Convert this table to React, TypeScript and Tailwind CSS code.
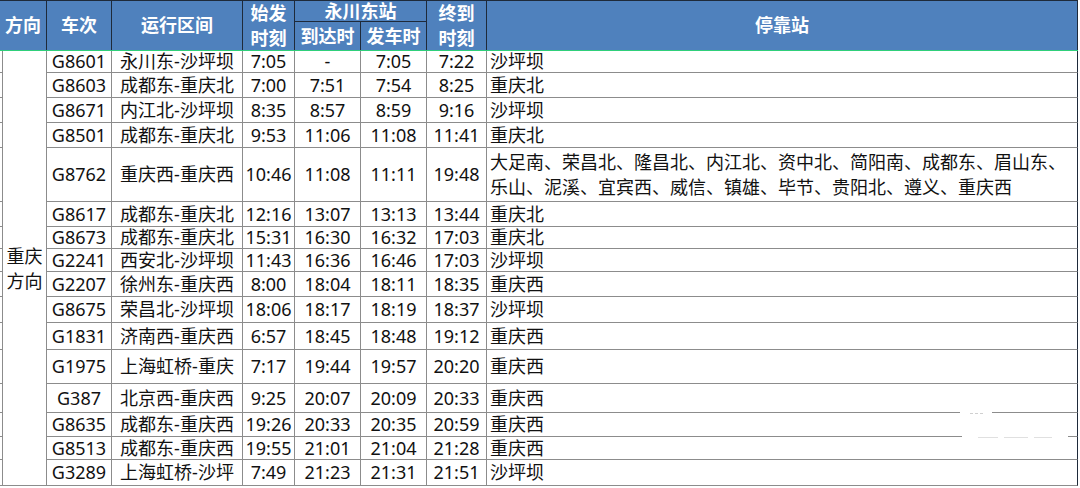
import React from "react";

type Row = { h: string; no: string; route: string; dep: string; arr: string; go: string; end: string; stops: string };

const rows: Row[] = [
  { h: "h-[22px]", no: "G8601", route: "永川东-沙坪坝", dep: "7:05", arr: "-", go: "7:05", end: "7:22", stops: "沙坪坝" },
  { h: "h-[25px]", no: "G8603", route: "成都东-重庆北", dep: "7:00", arr: "7:51", go: "7:54", end: "8:25", stops: "重庆北" },
  { h: "h-[25px]", no: "G8671", route: "内江北-沙坪坝", dep: "8:35", arr: "8:57", go: "8:59", end: "9:16", stops: "沙坪坝" },
  { h: "h-[25px]", no: "G8501", route: "成都东-重庆北", dep: "9:53", arr: "11:06", go: "11:08", end: "11:41", stops: "重庆北" },
  { h: "h-[54px]", no: "G8762", route: "重庆西-重庆西", dep: "10:46", arr: "11:08", go: "11:11", end: "19:48", stops: "大足南、荣昌北、隆昌北、内江北、资中北、简阳南、成都东、眉山东、乐山、泥溪、宜宾西、威信、镇雄、毕节、贵阳北、遵义、重庆西" },
  { h: "h-[25px]", no: "G8617", route: "成都东-重庆北", dep: "12:16", arr: "13:07", go: "13:13", end: "13:44", stops: "重庆北" },
  { h: "h-[22px]", no: "G8673", route: "成都东-重庆北", dep: "15:31", arr: "16:30", go: "16:32", end: "17:03", stops: "重庆北" },
  { h: "h-[23px]", no: "G2241", route: "西安北-沙坪坝", dep: "11:43", arr: "16:36", go: "16:46", end: "17:03", stops: "沙坪坝" },
  { h: "h-[25px]", no: "G2207", route: "徐州东-重庆西", dep: "8:00", arr: "18:04", go: "18:11", end: "18:35", stops: "重庆西" },
  { h: "h-[26px]", no: "G8675", route: "荣昌北-沙坪坝", dep: "18:06", arr: "18:17", go: "18:19", end: "18:37", stops: "沙坪坝" },
  { h: "h-[27px]", no: "G1831", route: "济南西-重庆西", dep: "6:57", arr: "18:45", go: "18:48", end: "19:12", stops: "重庆西" },
  { h: "h-[34px]", no: "G1975", route: "上海虹桥-重庆", dep: "7:17", arr: "19:44", go: "19:57", end: "20:20", stops: "重庆西" },
  { h: "h-[29px]", no: "G387", route: "北京西-重庆西", dep: "9:25", arr: "20:07", go: "20:09", end: "20:33", stops: "重庆西" },
  { h: "h-[24px]", no: "G8635", route: "成都东-重庆西", dep: "19:26", arr: "20:33", go: "20:35", end: "20:59", stops: "重庆西" },
  { h: "h-[23px]", no: "G8513", route: "成都东-重庆西", dep: "19:55", arr: "21:01", go: "21:04", end: "21:28", stops: "重庆西" },
  { h: "h-[26px]", no: "G3289", route: "上海虹桥-沙坪", dep: "7:49", arr: "21:23", go: "21:31", end: "21:51", stops: "沙坪坝" },
];

const cell = "border-r border-b border-[#8c8c8c] flex items-center justify-center whitespace-nowrap";
const hcell = "border-r border-[#1e2a3a] flex items-center justify-center text-center";

export default function App() {
  return (
    <div className="w-[1080px] h-[488px] overflow-hidden bg-white relative font-['Noto_Sans','Noto_Sans_CJK_SC',sans-serif] text-[18px] text-[#111]">
      {/* header */}
      <div className="grid grid-cols-[47px_65px_131px_52px_66px_66px_60px_591px] grid-rows-[21px_28px] w-[1078px] border-t border-t-[#1e2a3a] border-b border-b-[#2fcf7a] bg-[#4f81bd] text-white font-bold text-[18px] leading-[25px]">
        <div className={`${hcell} row-span-2`}>方向</div>
        <div className={`${hcell} row-span-2`}>车次</div>
        <div className={`${hcell} row-span-2`}>运行区间</div>
        <div className={`${hcell} row-span-2 flex-col`}>
          <span>始发</span>
          <span>时刻</span>
        </div>
        <div className={`${hcell} col-span-2 border-b`}>永川东站</div>
        <div className={`${hcell} row-span-2 flex-col`}>
          <span>终到</span>
          <span>时刻</span>
        </div>
        <div className={`${hcell} row-span-2`}>停靠站</div>
        <div className={hcell}>到达时</div>
        <div className={hcell}>发车时</div>
      </div>

      {/* body */}
      <div className="grid grid-cols-[3px_44px_65px_131px_52px_66px_66px_60px_591px] w-[1078px] leading-[25px]">
        {rows.map((r, i) => (
          <React.Fragment key={r.no}>
            <div className={`${r.h} border-b border-r border-[#8c8c8c]`} />
            {i === 0 && (
              <div className="row-span-16 border-r border-b border-[#8c8c8c] flex flex-col items-center justify-center pt-[2px]">
                <span>重庆</span>
                <span>方向</span>
              </div>
            )}
            <div className={`${cell} ${r.h}`}>{r.no}</div>
            <div className={`${cell} ${r.h}`}>{r.route}</div>
            <div className={`${cell} ${r.h}`}>{r.dep}</div>
            <div className={`${cell} ${r.h}`}>{r.arr}</div>
            <div className={`${cell} ${r.h}`}>{r.go}</div>
            <div className={`${cell} ${r.h}`}>{r.end}</div>
            <div className={`${r.h} border-r border-b border-r-[#1e2a3a] border-b-[#8c8c8c] flex items-center pl-[3px] pr-[1px]`}>
              <span className="whitespace-normal break-all">{r.stops}</span>
            </div>
          </React.Fragment>
        ))}
      </div>

      {/* faint watermark over the lower right lines */}
      <div className="absolute left-[960px] top-[411px] w-[32px] h-[4px] bg-white flex items-center justify-center gap-[2px]">
        <span className="w-[3px] h-[1px] bg-[#d0d0d0]" />
        <span className="w-[3px] h-[1px] bg-[#d0d0d0]" />
        <span className="w-[3px] h-[1px] bg-[#d0d0d0]" />
      </div>
      <div className="absolute left-[962px] top-[435px] w-[106px] h-[4px] bg-white flex items-center justify-center gap-[6px]">
        <span className="w-[20px] h-[1px] bg-[#e0e0e0]" />
        <span className="w-[24px] h-[1px] bg-[#e0e0e0]" />
        <span className="w-[18px] h-[1px] bg-[#e0e0e0]" />
      </div>
    </div>
  );
}
